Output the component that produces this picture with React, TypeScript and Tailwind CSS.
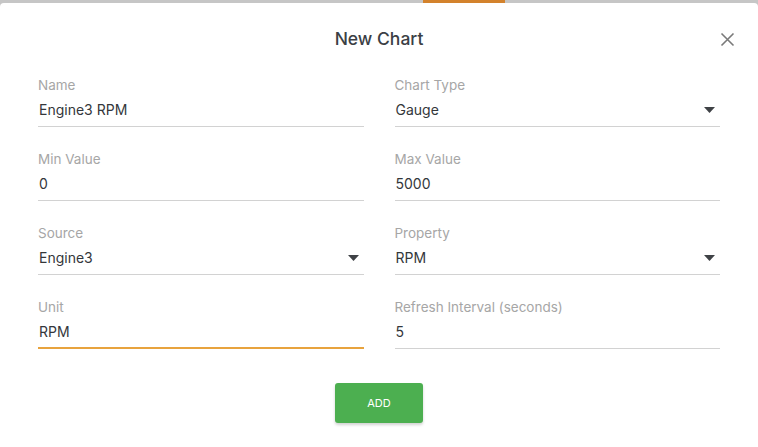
type FieldProps = {
  label: string;
  value: string;
  select?: boolean;
  focused?: boolean;
};

function Field({ label, value, select, focused }: FieldProps) {
  return (
    <div className="flex flex-col">
      <label className="text-[13.5px] leading-4 text-[#a6a6a6]">{label}</label>
      <div
        className={
          focused
            ? "mt-[4px] flex h-[30px] items-center justify-between border-b-2 border-[#e8a33d] pb-[2px]"
            : "mt-[4px] flex h-[30px] items-center justify-between border-b border-[#d2d2d2] pb-[3px]"
        }
      >
        <span className="pl-[1px] text-[14px] leading-5 text-[#34373b]">{value}</span>
        {select && (
          <svg width="11" height="6" viewBox="0 0 11 6" className="mr-[5px]">
            <path d="M0 0 L11 0 L5.5 6 Z" fill="#3f4246" />
          </svg>
        )}
      </div>
    </div>
  );
}

export default function App() {
  return (
    <div
      className="flex h-[447px] w-[758px] flex-col bg-[#c6c6c6]"
      style={{ fontFamily: "Inter, 'Liberation Sans', Arial, sans-serif" }}
    >
      {/* top progress strip */}
      <div className="flex h-[3px] shrink-0">
        <div className="w-[423px]" />
        <div className="w-[82px] bg-[#d3822c]" />
      </div>

      {/* Modal */}
      <div className="flex flex-1 flex-col rounded-t-[4px] bg-white px-[38px]">
        <div className="relative flex justify-center pt-[24px] pb-[26px]">
          <h2 className="text-[17.5px] font-medium leading-6 text-[#3b3f45]">New Chart</h2>
          <button className="absolute right-[-15px] top-[29px] text-[#7a7a7a]">
            <svg width="15" height="15" viewBox="0 0 15 15">
              <path d="M1.5 1.5 L13.5 13.5 M13.5 1.5 L1.5 13.5" stroke="currentColor" strokeWidth="1.6" />
            </svg>
          </button>
        </div>

        <div className="grid grid-cols-2 gap-x-[31px] gap-y-[24px]">
          <Field label="Name" value="Engine3 RPM" />
          <Field label="Chart Type" value="Gauge" select />
          <Field label="Min Value" value="0" />
          <Field label="Max Value" value="5000" />
          <Field label="Source" value="Engine3" select />
          <Field label="Property" value="RPM" select />
          <Field label="Unit" value="RPM" focused />
          <Field label="Refresh Interval (seconds)" value="5" />
        </div>

        <div className="flex justify-center pt-[34px]">
          <button className="h-[40px] w-[88px] rounded-[3px] bg-[#4caf50] text-[11px] text-white shadow-[0_2px_3px_rgba(0,0,0,0.18)]">
            ADD
          </button>
        </div>
      </div>
    </div>
  );
}
